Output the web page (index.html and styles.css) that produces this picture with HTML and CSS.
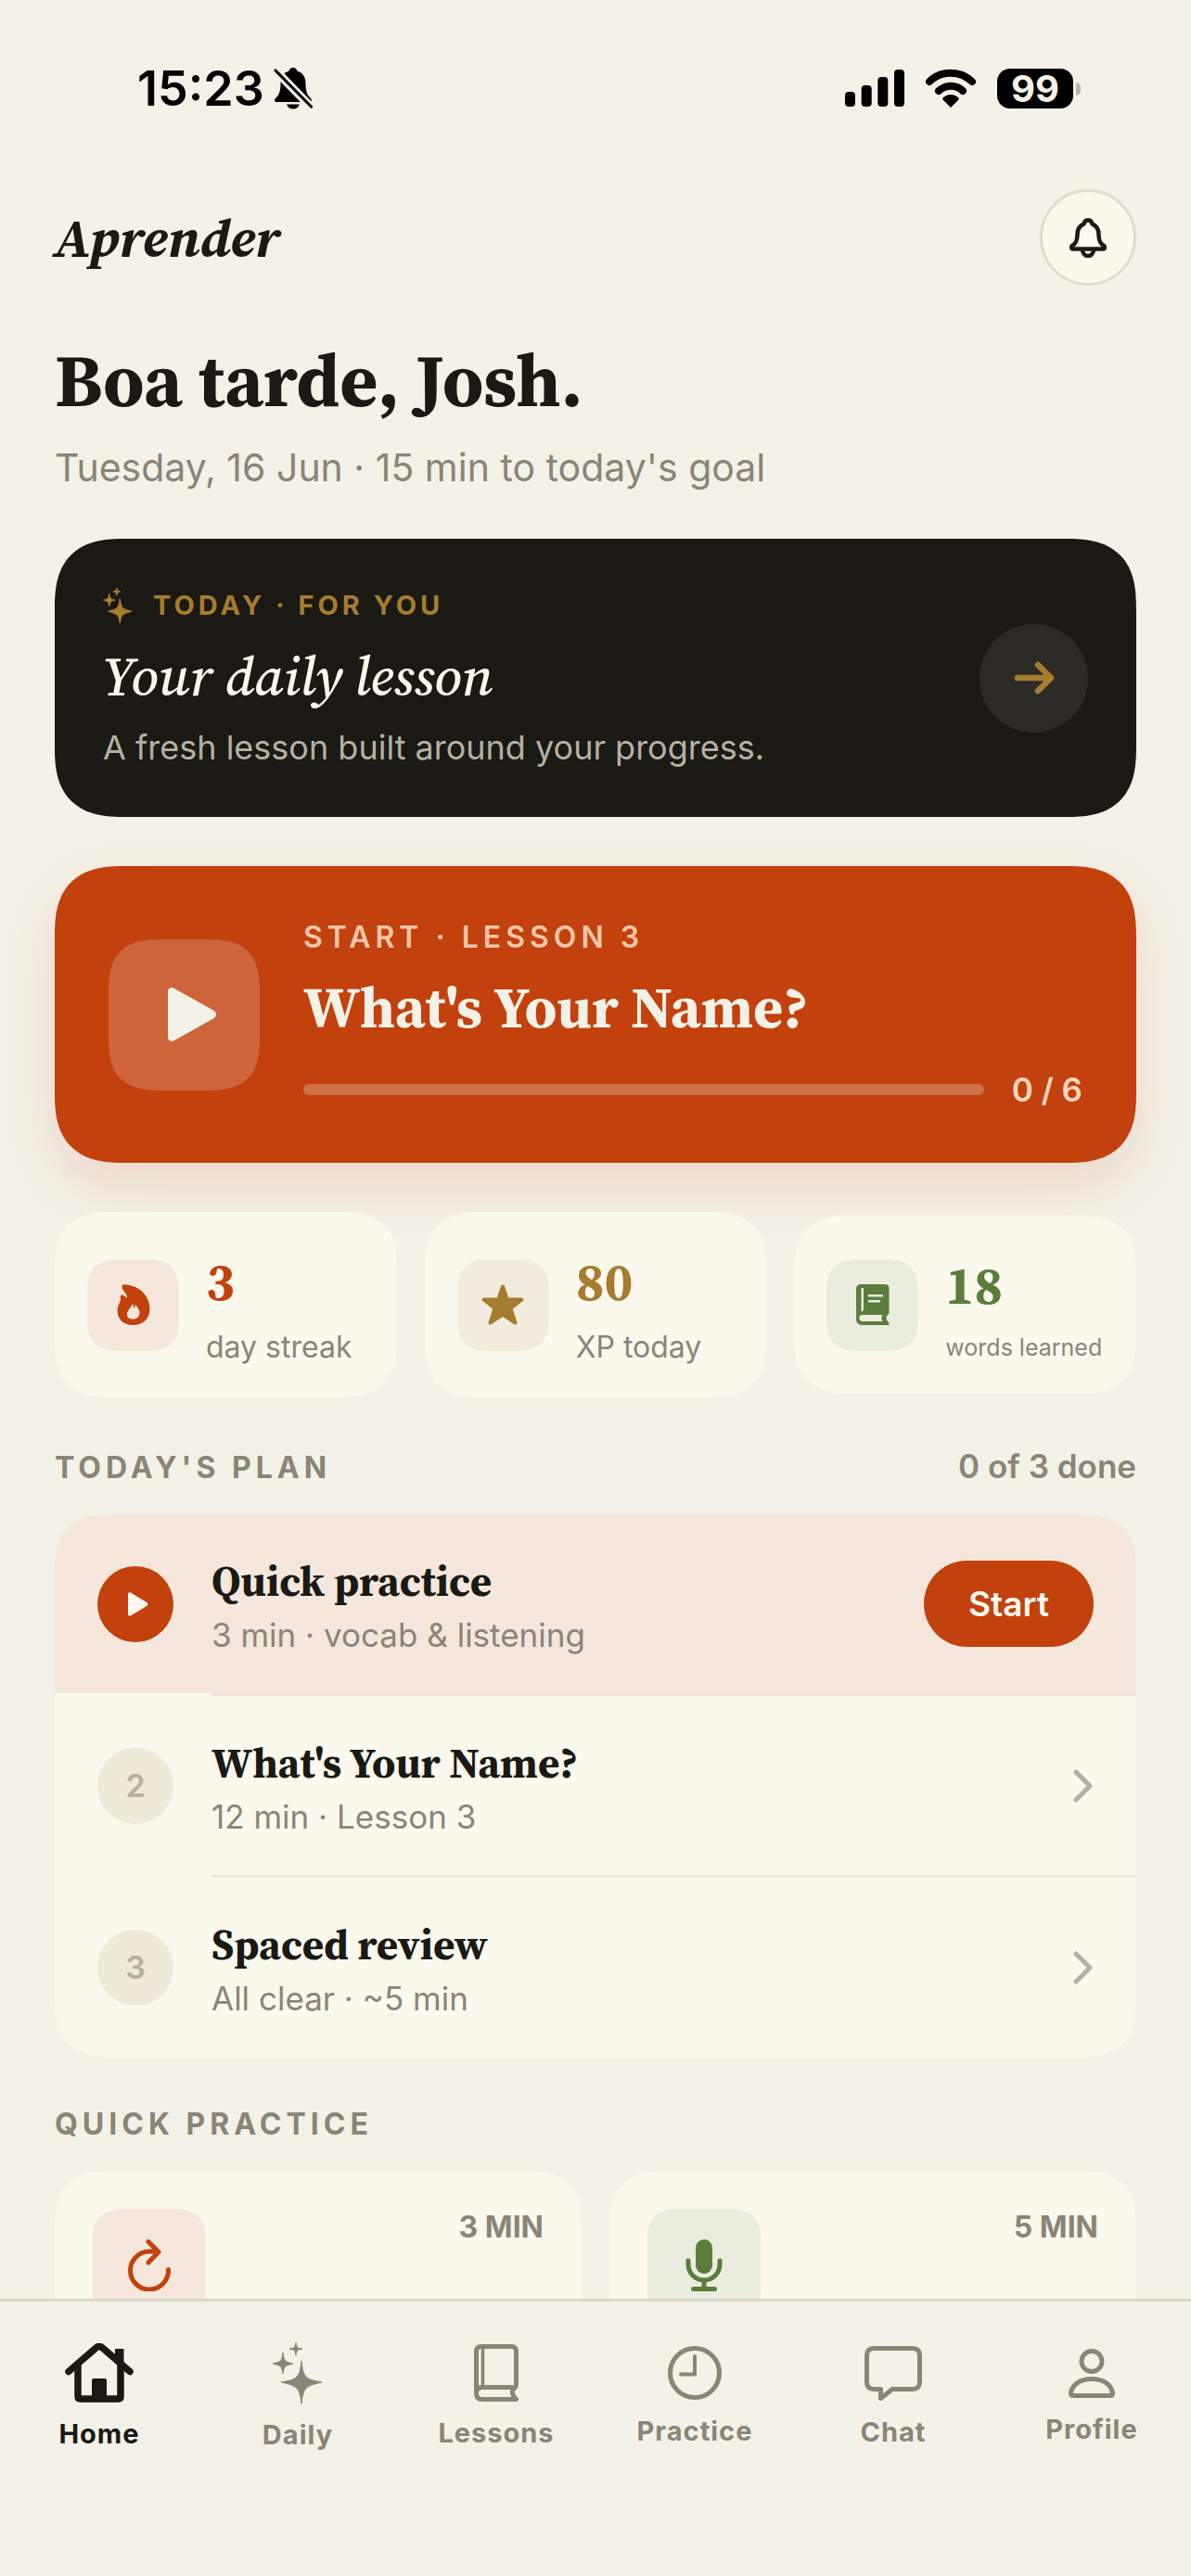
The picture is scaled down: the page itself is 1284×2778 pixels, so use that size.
FILE: index.html
```html
<!DOCTYPE html>
<html lang="en">
<head>
  <meta charset="UTF-8" />
  <meta name="viewport" content="width=device-width, initial-scale=1.0" />
  <title>Aprender</title>
  <link rel="stylesheet" href="styles.css">
</head>
<body>
  <div class="app">
    <div class="screen">
      <div class="status-bar">
        <div class="status-left">
          <span class="time">15:23</span>
          <svg width="44" height="46" viewBox="0 0 44 46">
            <path d="M22 1c-3 0-4 2-4.400 3.500C11 6.500 8.500 12 8.500 18c0 8-1.500 12-5 15.500C1 36 2 38 4.500 38h35c2.500 0 3.500-2 1-4.500-3.500-3.500-5-7.500-5-15.500 0-6-2.500-11.500-9.100-13.500C26 3 25 1 22 1zM15 40.500c1 3 3.500 5 7 5s6-2 7-5z" fill="#000"/>
            <path d="M2 3l39 40" stroke="#f4f1e8" stroke-width="9"/>
            <path d="M3 4l38.500 39" stroke="#000" stroke-width="3.200" stroke-linecap="round"/>
          </svg>
        </div>
        <div class="status-right">
          <svg width="64" height="40" viewBox="0 0 64 40">
            <rect x="0" y="24" width="11" height="16" rx="4"/>
            <rect x="17.700" y="17" width="11" height="23" rx="4"/>
            <rect x="35.300" y="8" width="11" height="32" rx="4"/>
            <rect x="53" y="0" width="11" height="40" rx="4"/>
          </svg>
          <svg width="56" height="42" viewBox="0 0 56 42">
            <path d="M5 14a33 33 0 0 1 46 0M15 24a19 19 0 0 1 26 0" fill="none" stroke="#000" stroke-width="8" stroke-linecap="round"/>
            <path d="M28 42l-8-8c-1-1-1-2 0-3 5-4 11-4 16 0 1 1 1 2 0 3z"/>
          </svg>
          <span class="battery">99</span>
        </div>
      </div>

      <header class="header">
        <div class="brand">Aprender</div>
        <button class="bell" aria-label="Notifications">
          <svg width="40" height="43" viewBox="0 0 40 43" fill="none" stroke="#1a1914" stroke-width="4.500" stroke-linejoin="round" stroke-linecap="round">
            <path d="M20 2.500c-2.500 0-4 1.600-4.300 3.800C10.500 8.300 8.500 12.500 8.500 17.500c0 7-1.500 10-5.500 12.500-1.600 1-1.200 3.500.8 3.500h32.400c2 0 2.400-2.500.8-3.500-4-2.500-5.500-5.500-5.500-12.500 0-5-2-9.200-7.200-11.200C24 4.100 22.500 2.500 20 2.500z"/>
            <path d="M14 35c.5 3.500 3 6 6 6s5.500-2.500 6-6"/>
          </svg>
        </button>
      </header>

      <h1>Boa tarde, Josh.</h1>
      <p class="date">Tuesday, 16 Jun · 15 min to today's goal</p>

      <a class="daily" href="#">
        <div class="daily-text">
          <div class="eyebrow gold">
            <svg width="32" height="38" viewBox="0 0 54 66" fill="currentColor" stroke="currentColor" stroke-width="2">
              <path d="M31 20c2 18 4 20 22 24-18 4-20 6-22 22-2-16-4-18-22-22 18-4 20-6 22-24zM11 11c1 9 2 10 11 12-9 2-10 3-11 11-1-8-2-9-11-11 9-2 10-3 11-12zM25 0c.7 5.500 1.300 6 7 7-5.700 1-6.300 1.500-7 7-.7-5.500-1.300-6-7-7 5.700-1 6.300-1.500 7-7z"/>
            </svg>
            TODAY · FOR YOU
          </div>
          <div class="daily-title">Your daily lesson</div>
          <div class="daily-sub">A fresh lesson built around your progress.</div>
        </div>
        <span class="go">
          <svg width="44" height="36" viewBox="0 0 44 36" fill="none" stroke="currentColor" stroke-width="6.500" stroke-linecap="round" stroke-linejoin="round">
            <path d="M4 18h35M26 4l14 14-14 14"/>
          </svg>
        </span>
      </a>

      <a class="lesson" href="#">
        <span class="lesson-play">
          <svg width="54" height="60" viewBox="0 0 54 60"><path d="M1 5.500C1 1.500 4.500 0 8 2l42 23.500c4 2.500 4 6.500 0 9L8 58c-3.500 2-7 .5-7-3.500z" fill="#f4f1e8"/></svg>
        </span>
        <div class="lesson-text">
          <div class="lesson-eyebrow">START · LESSON 3</div>
          <div class="lesson-title">What's Your Name?</div>
          <div class="lesson-progress">
            <span class="track"></span>
            <span>0 / 6</span>
          </div>
        </div>
      </a>

      <div class="stats">
        <div class="stat streak">
          <span class="tile">
            <svg width="36" height="44" viewBox="0 0 36 44"><path fill="currentColor" fill-rule="evenodd" d="M7.500.3C22 .5 35.500 11 35.500 26.500 35.500 37 28 44 17.500 44S.5 37.500.5 28.500c0-5 2.500-8 3.300-11C4.500 15 3 13 4.500 11.700c1.500-.8 4 .8 6.500 3.300.5-5.500-5.500-8-5.500-12C5.500 1.500 6.200.3 7.500.3zM17 20c-.5 5-6 7-6 12.500 0 3 2.500 5 6.500 5s7-2.500 7-7c0-4-3-6-4.500-8.500-.5 1.500-.8 3-1.500 4.500-.8-2-1-4.500-1.500-6.500z"/></svg>
          </span>
          <div>
            <div class="num">3</div>
            <div class="label">day streak</div>
          </div>
        </div>
        <div class="stat xp">
          <span class="tile">
            <svg width="46" height="44" viewBox="0 0 46 44"><path fill="currentColor" stroke="currentColor" stroke-width="4" stroke-linejoin="round" d="M23 2.500l4.800 14H43.500L31.500 26l5 15.500L23 32.500 9.500 41.500l5-15.500L2.500 16.500h15.700z"/></svg>
          </span>
          <div>
            <div class="num">80</div>
            <div class="label">XP today</div>
          </div>
        </div>
        <div class="stat words">
          <span class="tile">
            <svg width="36" height="44" viewBox="0 0 36 44"><path fill="currentColor" d="M5 0h26c3 0 4.500 1.500 4.500 4.500v26c0 2-3 3-3 6 0 3 3.500 4 3 6 0 1-.5 1.500-1.500 1.500H7c-4.500 0-7-2.500-7-6.500V5c0-3 2-5 5-5z"/><path d="M28.500 33c-1.500 2-1.500 5 0 7H7c-5 0-5-7 0-7zM5.500 4h2.500v24l-2.500 2zM13 11h16v2.500H13zM13 17h13v2.500H13z" fill="#ebece0"/></svg>
          </span>
          <div>
            <div class="num">18</div>
            <div class="label label-small">words learned</div>
          </div>
        </div>
      </div>

      <div class="section-head">
        <h2>TODAY'S PLAN</h2>
        <span class="done">0 of 3 done</span>
      </div>
      <div class="plan">
        <div class="plan-row active">
          <span class="step"><svg width="22" height="26" viewBox="0 0 22 26"><path d="M0 2.500C0 .6 1.500-.2 3.200.8l17 10.300c1.600 1 1.600 2.800 0 3.800l-17 10.300c-1.700 1-3.200.2-3.200-1.700z" fill="#fbf8ee"/></svg></span>
          <div class="plan-text">
            <h3>Quick practice</h3>
            <p>3 min · vocab &amp; listening</p>
          </div>
          <button class="start">Start</button>
        </div>
        <div class="plan-row">
          <span class="step">2</span>
          <div class="plan-text">
            <h3>What's Your Name?</h3>
            <p>12 min · Lesson 3</p>
          </div>
          <svg width="22" height="36" viewBox="0 0 22 36" fill="none" stroke="#b5b0a2" stroke-width="5" stroke-linecap="round" stroke-linejoin="round"><path d="M3 3l15 15L3 33"/></svg>
        </div>
        <div class="plan-row">
          <span class="step">3</span>
          <div class="plan-text">
            <h3>Spaced review</h3>
            <p>All clear · ~5 min</p>
          </div>
          <svg width="22" height="36" viewBox="0 0 22 36" fill="none" stroke="#b5b0a2" stroke-width="5" stroke-linecap="round" stroke-linejoin="round"><path d="M3 3l15 15L3 33"/></svg>
        </div>
      </div>

      <div class="section-head">
        <h2>QUICK PRACTICE</h2>
      </div>
      <div class="quick">
        <div class="quick-card">
          <span class="tile tile-large streak">
            <svg width="46" height="56" viewBox="0 0 46 56" fill="none" stroke="currentColor" stroke-width="5" stroke-linecap="round" stroke-linejoin="round"><path d="M43.500 32.500A20.500 20.500 0 1 1 23 13h9M22 2.500L33 13.500 22 25"/></svg>
          </span>
          <span class="mins">3 MIN</span>
        </div>
        <div class="quick-card">
          <span class="tile tile-large words">
            <svg width="40" height="56" viewBox="0 0 40 56" fill="none" stroke="currentColor" stroke-width="5" stroke-linecap="round"><rect x="11" y="0" width="18" height="37" rx="9" fill="currentColor" stroke="none"/><path d="M3 23v4a17 17 0 0 0 34 0v-4M20 44v9M8.500 53.500h23"/></svg>
          </span>
          <span class="mins">5 MIN</span>
        </div>
      </div>
    </div>

    <nav class="tabs">
      <a class="tab current" href="#">
        <svg width="74" height="64" viewBox="0 0 74 64" fill="none" stroke="currentColor" stroke-width="7.500" stroke-linecap="round" stroke-linejoin="round"><path d="M4 30.500L33.500 5q3.500-3 7 0L70 30.500"/><path d="M14 24v33.500q0 2.500 2.500 2.500h41q2.500 0 2.500-2.500V24"/><path d="M54 6h9.500v20L54 18z" fill="currentColor" stroke="none"/><path d="M29 60V40q0-2 2-2h12q2 0 2 2v20z" fill="currentColor" stroke="none"/></svg>
        Home
      </a>
      <a class="tab" href="#">
        <svg width="54" height="66" viewBox="0 0 54 66" fill="currentColor" stroke="currentColor" stroke-width="1"><path d="M31 20c2 18 4 20 22 23-18 4-20 6-22 23-2-17-4-19-22-23 18-3 20-5 22-23zM11 11c1 9 2 10 11 12-9 2-10 3-11 11-1-8-2-9-11-11 9-2 10-3 11-12zM25 0c.7 5.500 1.300 6 7 7-5.700 1-6.300 1.500-7 7-.7-5.500-1.300-6-7-7 5.700-1 6.300-1.500 7-7z"/></svg>
        Daily
      </a>
      <a class="tab" href="#">
        <svg width="48" height="62" viewBox="0 0 48 62" fill="none" stroke="currentColor" stroke-width="5" stroke-linecap="round" stroke-linejoin="round"><path d="M2.500 52V8q0-5.500 5.500-5.500h32q5.500 0 5.500 5.500v36q0 2-2 3.500c-3.500 2.500-2.500 8 2 12H9q-6.500 0-6.500-6.500t6.500-6.500h35"/><path d="M9.500 4v42" stroke-width="3.500"/></svg>
        Lessons
      </a>
      <a class="tab" href="#">
        <svg width="58" height="58" viewBox="0 0 58 58" fill="none" stroke="currentColor" stroke-width="5" stroke-linecap="round" stroke-linejoin="round"><circle cx="29" cy="29" r="26.500"/><path d="M29 11v19.500H14" stroke-width="4"/></svg>
        Practice
      </a>
      <a class="tab" href="#">
        <svg width="62" height="59" viewBox="0 0 62 59" fill="none" stroke="currentColor" stroke-width="5" stroke-linejoin="round"><path d="M10 2.500h42q7.500 0 7.500 8v28q0 8-7.500 8H30L17.500 56.500V46.500H10q-7.500 0-7.500-8v-28q0-8 7.500-8z"/></svg>
        Chat
      </a>
      <a class="tab" href="#">
        <svg width="50" height="53" viewBox="0 0 50 53" fill="none" stroke="currentColor" stroke-width="5" stroke-linejoin="round"><circle cx="25" cy="13.500" r="11"/><path d="M5 50.500q-2.500 0-2.500-2.500C3.500 38.500 13 32.500 25 32.500S46.500 38.500 47.500 48q0 2.500-2.500 2.500z"/></svg>
        Profile
      </a>
    </nav>
  </div>
</body>
</html>
```

FILE: styles.css
```css
* {
  box-sizing: border-box;
}
body {
  margin: 0;
  background: #f4f1e8;
  color: #1a1914;
  font-family: Inter, sans-serif;
}
h1, h2, h3, p {
  margin: 0;
}
a {
  color: inherit;
  text-decoration: none;
}
svg {
  display: block;
  flex: none;
}
button {
  border: none;
  padding: 0;
  font-family: inherit;
  cursor: pointer;
}
.app {
  display: flex;
  flex-direction: column;
  height: 100vh;
}
.screen {
  flex: 1;
  min-height: 0;
  overflow-y: auto;
  scrollbar-width: none;
  padding: 0 59px;
}

/* status bar */
.status-bar {
  display: flex;
  justify-content: space-between;
  align-items: center;
  height: 70px;
  margin: 60px 60px 74px 89px;
  color: #000;
}
.status-left, .status-right {
  display: flex;
  align-items: center;
}
.status-left {
  gap: 9px;
}
.status-right {
  gap: 22px;
}
.time {
  font-size: 52px;
  font-weight: 600;
}
.battery {
  position: relative;
  width: 82px;
  margin-right: 8px;
  border-radius: 14px;
  background: #000;
  color: #f4f1e8;
  font-size: 40px;
  font-weight: 700;
  line-height: 43px;
  text-align: center;
}
.battery::after {
  content: "";
  position: absolute;
  left: 85px;
  top: 15px;
  width: 5px;
  height: 14px;
  border-radius: 0 5px 5px 0;
  background: #b5b3aa;
}

/* header */
.header {
  display: flex;
  justify-content: space-between;
  align-items: center;
}
.brand, h1, h3, .daily-title, .lesson-title, .num {
  font-family: "Source Serif 4", "Liberation Serif", serif;
}
.brand {
  font-size: 58px;
  font-style: italic;
  font-weight: 700;
}
.bell {
  display: flex;
  align-items: center;
  justify-content: center;
  width: 104px;
  height: 104px;
  border: 3px solid #dfdccf;
  border-radius: 50%;
  background: #fbf8ee;
}
h1 {
  margin-top: 54px;
  font-size: 79px;
  line-height: 96px;
}
.date {
  margin-top: 20px;
  font-size: 41px;
  line-height: 52px;
  color: #8a8577;
}

/* daily card */
.daily {
  display: flex;
  justify-content: space-between;
  align-items: center;
  margin-top: 51px;
  padding: 53px 52px;
  border-radius: 60px;
  background: #1a1914;
}
.eyebrow {
  display: flex;
  align-items: center;
  gap: 22px;
  font-size: 29px;
  font-weight: 700;
  line-height: 38px;
  letter-spacing: 4px;
}
.gold {
  color: #a67c2e;
}
.daily-title {
  margin-top: 22px;
  color: #fbf8ee;
  font-size: 59px;
  font-style: italic;
  font-weight: 500;
  line-height: 72px;
}
.daily-sub {
  margin-top: 18px;
  color: #b5b0a2;
  font-size: 36px;
  line-height: 44px;
}
.go {
  display: flex;
  align-items: center;
  justify-content: center;
  flex: none;
  width: 117px;
  height: 117px;
  border-radius: 50%;
  background: #2b2a25;
  color: #a67c2e;
}

/* current lesson */
.lesson {
  display: flex;
  align-items: center;
  gap: 47px;
  margin-top: 53px;
  padding: 57px 58px;
  border-radius: 66px;
  background: #c2410c;
  box-shadow: 0 24px 60px rgba(194, 65, 12, 0.14);
}
.lesson-play {
  display: flex;
  align-items: center;
  justify-content: center;
  flex: none;
  width: 163px;
  height: 163px;
  padding-left: 16px;
  border-radius: 48px;
  background: #cd643a;
}
.lesson-text {
  flex: 1;
}
.lesson-eyebrow {
  color: #f3c6ab;
  font-size: 32px;
  font-weight: 600;
  line-height: 40px;
  letter-spacing: 5px;
}
.lesson-title {
  margin-top: 18px;
  color: #f4f1e8;
  font-size: 62px;
  font-weight: 700;
  line-height: 76px;
}
.lesson-progress {
  display: flex;
  align-items: center;
  gap: 30px;
  margin-top: 28px;
  color: #f5d5c0;
  font-size: 35px;
  font-weight: 600;
  line-height: 44px;
}
.track {
  flex: 1;
  height: 12px;
  border-radius: 6px;
  background: #ce7048;
}

/* stats */
.stats {
  display: grid;
  grid-template-columns: repeat(3, 1fr);
  align-items: center;
  gap: 30px;
  margin-top: 53px;
  position: relative;
}
.stat {
  display: flex;
  align-items: center;
  gap: 29px;
  padding: 37px 35px;
  border-radius: 50px;
  background: #fbf8ee;
  white-space: nowrap;
}
.tile {
  display: flex;
  align-items: center;
  justify-content: center;
  flex: none;
  width: 99px;
  height: 99px;
  border-radius: 32px;
}
.streak {
  color: #c2410c;
}
.xp {
  color: #a67c2e;
}
.words {
  color: #5a7d3c;
}
.streak .tile, .tile.streak {
  background: #f5e7db;
}
.xp .tile {
  background: #f2ecdf;
}
.words .tile, .tile.words {
  background: #ebece0;
}
.num {
  font-size: 57px;
  font-weight: 700;
  line-height: 76px;
}
.label {
  margin-top: 16px;
  color: #8a8577;
  font-size: 32px;
  line-height: 34px;
}
.label-small {
  font-size: 25px;
  line-height: 26px;
}

/* sections */
.section-head {
  display: flex;
  justify-content: space-between;
  align-items: baseline;
  margin: 52px 0 29px;
  color: #8a8577;
}
h2 {
  font-size: 32px;
  font-weight: 700;
  line-height: 42px;
  letter-spacing: 5px;
}
.done {
  font-size: 35px;
  font-weight: 600;
  line-height: 44px;
}
.plan {
  overflow: hidden;
  border-radius: 50px;
  background: #fbf8ee;
}
.plan-row {
  position: relative;
  display: flex;
  align-items: center;
  gap: 41px;
  height: 193px;
  padding: 0 46px;
}
.plan-row + .plan-row {
  margin-top: 3px;
}
.plan-row + .plan-row::before {
  content: "";
  position: absolute;
  top: -3px;
  left: 169px;
  right: 0;
  height: 3px;
  background: #ece7d6;
}
.plan-row.active {
  background: #f5e7db;
}
.plan-row.active + .plan-row::before {
  background: #f2e5d8;
}
.step {
  display: flex;
  align-items: center;
  justify-content: center;
  flex: none;
  width: 82px;
  height: 82px;
  border-radius: 50%;
  background: #efe9da;
  color: #b5b0a2;
  font-size: 34px;
  font-weight: 600;
}
.active .step {
  padding-left: 5px;
  background: #c2410c;
}
.plan-text {
  flex: 1;
}
h3 {
  font-size: 45px;
  line-height: 60px;
}
.plan-text p {
  margin-top: 6px;
  color: #8a8577;
  font-size: 35px;
  line-height: 44px;
}
.start {
  width: 183px;
  height: 93px;
  border-radius: 47px;
  background: #c2410c;
  color: #fbf8ee;
  font-size: 37px;
  font-weight: 600;
}

/* quick practice */
.quick {
  display: grid;
  grid-template-columns: 1fr 1fr;
  gap: 30px;
}
.quick-card {
  display: flex;
  justify-content: space-between;
  align-items: flex-start;
  min-height: 320px;
  padding: 41px;
  border-radius: 50px;
  background: #fbf8ee;
}
.tile-large {
  width: 122px;
  height: 122px;
  border-radius: 38px;
}
.mins {
  color: #8a8577;
  font-size: 32px;
  font-weight: 700;
  line-height: 40px;
}

/* tab bar */
.tabs {
  display: grid;
  grid-template-columns: repeat(6, 1fr);
  flex: none;
  height: 299px;
  padding-bottom: 90px;
  border-top: 3px solid #dcd9cc;
  background: #f4f1e8;
}
.tab {
  display: flex;
  flex-direction: column;
  align-items: center;
  justify-content: center;
  gap: 16px;
  color: #8a8577;
  font-size: 29px;
  font-weight: 700;
  line-height: 36px;
  letter-spacing: 1px;
}
.tab.current {
  color: #1a1914;
}

/* smoother corners where the browser has them */
@supports (corner-shape: squircle) {
  .daily, .lesson {
    border-radius: 76px;
    corner-shape: superellipse(1.4);
  }
  .stat, .plan, .quick-card {
    border-radius: 62px;
    corner-shape: superellipse(1.4);
  }
  .tile, .lesson-play {
    border-radius: 36px;
    corner-shape: superellipse(1.4);
  }
  .lesson-play {
    border-radius: 56px;
  }
}
```
